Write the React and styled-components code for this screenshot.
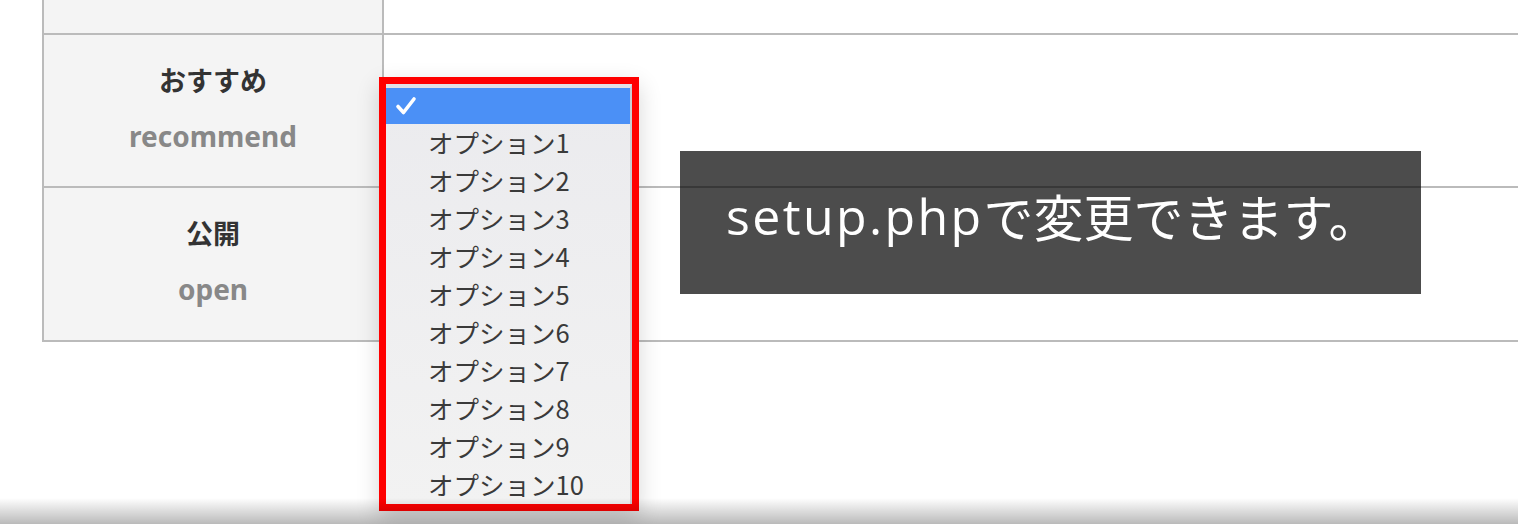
import React from "react";
import styled, { createGlobalStyle } from "styled-components";

const Global = createGlobalStyle`
  html, body { margin: 0; padding: 0; background: #fff; overflow: hidden; }
  * { box-sizing: border-box; }
`;

const Page = styled.div`
  position: relative;
  width: 1518px;
  height: 524px;
  overflow: hidden;
  font-family: "Noto Sans", "Noto Sans CJK JP", sans-serif;
`;

const Table = styled.div`
  margin-left: 42px;
  border-left: 2px solid #bbbbbb;
  display: flex;
  flex-direction: column;
`;

const Row = styled.div`
  display: grid;
  grid-template-columns: 340px 1fr;
  height: ${(p) => p.$h}px;
  border-bottom: 2px solid #bbbbbb;
`;

const HeadCell = styled.div`
  background: #f4f4f4;
  border-right: 2px solid #bbbbbb;
  display: flex;
  flex-direction: column;
  align-items: center;
  justify-content: center;
  gap: 24px;
  padding-bottom: 4px;
`;

const DataCell = styled.div`
  background: #fff;
`;

const Ja = styled.div`
  font-family: "Noto Sans CJK JP", sans-serif;
  font-weight: 700;
  font-size: 27px;
  line-height: 30px;
  color: #333;
`;

const En = styled.div`
  font-family: "Noto Sans", sans-serif;
  font-weight: 700;
  font-size: 28px;
  line-height: 34px;
  color: #888;
`;

const InfoBox = styled.div`
  position: absolute;
  left: 680px;
  top: 151px;
  width: 741px;
  height: 143px;
  background: rgba(0, 0, 0, 0.7);
  display: flex;
  align-items: center;
  padding-left: 46px;
  padding-bottom: 14px;
  color: #fff;
  font-family: "Open Sans", "Noto Sans CJK JP", sans-serif;
  font-weight: 400;
  font-size: 50px;
  white-space: nowrap;
`;

const Latin = styled.span`
  letter-spacing: 2.4px;
`;

const Frame = styled.div`
  position: absolute;
  left: 379px;
  top: 77px;
  width: 260px;
  height: 434px;
  border: 7px solid #ff0000;
  box-shadow: 0 8px 22px rgba(0, 0, 0, 0.16);
  background: #ededef;
`;

const Menu = styled.div`
  height: 100%;
  border-right: 2px solid #c9ccd3;
  border-top: 4px solid #e2e2e5;
  background: linear-gradient(to bottom, #ebebee, #f2f2f2);
  display: flex;
  flex-direction: column;
`;

const Selected = styled.div`
  height: 36px;
  background: #4b90f6;
  display: flex;
  align-items: center;
  padding-left: 9px;
`;

const Item = styled.div`
  height: 38px;
  display: flex;
  align-items: center;
  padding-left: 42px;
  padding-bottom: 3px;
  font-family: "Noto Sans CJK JP", sans-serif;
  font-size: 25.5px;
  color: #3a3a3a;
  white-space: nowrap;
`;

const BottomShade = styled.div`
  position: absolute;
  left: 0;
  right: 0;
  bottom: 0;
  height: 26px;
  background: linear-gradient(to bottom, rgba(0, 0, 0, 0), rgba(0, 0, 0, 0.27));
  pointer-events: none;
`;

const Check = () => (
  <svg width="22" height="20" viewBox="0 0 22 20">
    <polyline
      points="3,10.5 8.5,16.5 19,3"
      fill="none"
      stroke="#fff"
      strokeWidth="3.6"
      strokeLinecap="round"
      strokeLinejoin="round"
    />
  </svg>
);

const rows = [
  { ja: "おすすめ", en: "recommend", h: 153 },
  { ja: "公開", en: "open", h: 154 },
];

const options = Array.from({ length: 10 }, (_, i) => `オプション${i + 1}`);

export default function App() {
  return (
    <Page>
      <Global />
      <Table>
        <Row $h={35}>
          <HeadCell />
          <DataCell />
        </Row>
        {rows.map((r) => (
          <Row key={r.en} $h={r.h}>
            <HeadCell>
              <Ja>{r.ja}</Ja>
              <En>{r.en}</En>
            </HeadCell>
            <DataCell />
          </Row>
        ))}
      </Table>
      <InfoBox>
        <Latin>setup.php</Latin>で変更できます。
      </InfoBox>
      <Frame>
        <Menu>
          <Selected>
            <Check />
          </Selected>
          {options.map((o) => (
            <Item key={o}>{o}</Item>
          ))}
        </Menu>
      </Frame>
      <BottomShade />
    </Page>
  );
}
